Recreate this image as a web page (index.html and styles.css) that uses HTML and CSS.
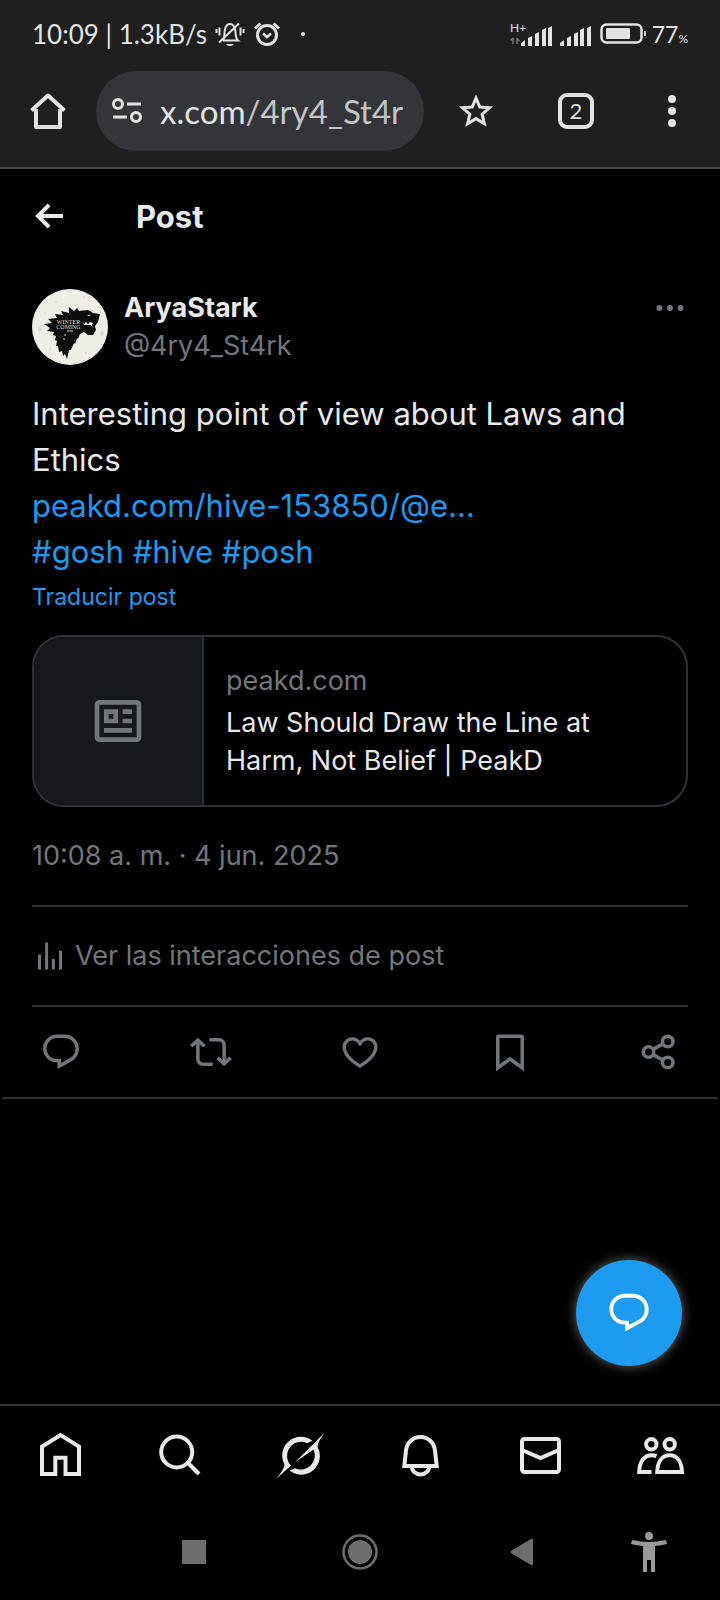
FILE: index.html
```html
<!DOCTYPE html>
<html lang="es">
<head>
    <meta charset="UTF-8">
    <meta name="viewport" content="width=device-width, initial-scale=1.0">
    <title>Post</title>
    <link rel="stylesheet" href="styles.css">
</head>
<body>
    <!-- Phone status bar -->
    <div class="status-bar">
        <span class="status-text">10:09 | 1.3kB/s</span>
        <svg class="status-icon" width="30" height="28" viewBox="0 0 30 28" fill="none" stroke="#e3e3e3" stroke-width="2">
            <path d="M8 21c2-3 1-8 2-12 1-3.500 3-5 5-5s4 1.500 5 5c1 4 0 9 3 11.500H8M4 22.500L24 3.500"/>
            <path d="M1.500 9v4M4.500 7.500v8M25.500 7.500v8M28.500 9v4"/>
            <path d="M11 24h8c-1 2.500-7 2.500-8 0z" fill="#e3e3e3" stroke="none"/>
        </svg>
        <svg class="status-icon" width="28" height="28" viewBox="0 0 28 28" fill="none" stroke="#e3e3e3" stroke-width="3">
            <circle cx="14" cy="15" r="9.500"/>
            <path d="M10 13.500l4 3.500 4-3.500" stroke-width="2.500"/>
            <path d="M2 8.500l5.500-5M26 8.500l-5.500-5"/>
        </svg>
        <span class="status-dot"></span>
        <svg class="signal" width="82" height="26" viewBox="0 0 82 26" fill="#e3e3e3">
            <text class="network" x="0" y="11">H+</text>
            <path d="M3 17v6M0.500 19.500l2.500-2.500M7 23v-6M9.500 20l-2.500-2.500" stroke="#777" stroke-width="1.500" fill="none"/>
            <path d="M11 25v-3l4-3v6zM18 25v-8l4-2v10zM25 25V13l4-2v14zM32 25V9l4-2v18zM38 25V7l4-2v20z"/>
            <path d="M50 25v-3l4-3v6zM57 25v-8l4-2v10zM64 25V13l4-2v14zM70 25V9l4-2v18zM77 25V7l4-2v20z"/>
        </svg>
        <svg class="battery" width="47" height="22" viewBox="0 0 47 22">
            <rect x="1.500" y="1.500" width="40" height="18" rx="5" fill="none" stroke="#e3e3e3" stroke-width="2.500"/>
            <rect x="6" y="5" width="24" height="11" rx="1" fill="#e3e3e3"/>
            <path d="M44 8h1.500q1 2.500 0 5H44z" fill="#e3e3e3"/>
        </svg>
        <span class="percent">77<small>%</small></span>
    </div>

    <!-- Browser toolbar -->
    <div class="toolbar">
        <button class="icon-btn" aria-label="Inicio">
            <svg width="36" height="36" viewBox="0 0 36 36" fill="none" stroke="#e3e3e3" stroke-width="4" stroke-linejoin="round">
                <path d="M6 16v18h24V16M1.500 17.500L18 2.500l16.500 15"/>
            </svg>
        </button>
        <div class="address">
            <button class="icon-btn" aria-label="Información del sitio">
                <svg width="30" height="26" viewBox="0 0 30 26" fill="none" stroke="#e3e3e3" stroke-width="3">
                    <circle cx="6" cy="6" r="4.500"/>
                    <circle cx="24" cy="19" r="4.500"/>
                    <path d="M15 6h14M1 19h14"/>
                </svg>
            </button>
            <button class="url">x.com<span>/4ry4_St4r</span></button>
        </div>
        <button class="icon-btn" aria-label="Favorito">
            <svg width="36" height="34" viewBox="0 0 36 34" fill="none" stroke="#e3e3e3" stroke-width="3">
                <path d="M18 4l3.800 9 9.700.800-7.400 6.400 2.300 9.500L18 24.600l-8.400 5.100 2.300-9.500-7.400-6.400 9.700-.800z"/>
            </svg>
        </button>
        <button class="icon-btn" aria-label="Pestañas"><span class="tab-count">2</span></button>
        <button class="icon-btn" aria-label="Menú">
            <svg width="8" height="32" viewBox="0 0 8 32" fill="#e3e3e3">
                <circle cx="4" cy="4" r="4"/><circle cx="4" cy="16" r="4"/><circle cx="4" cy="28" r="4"/>
            </svg>
        </button>
    </div>

    <header class="page-header">
        <button class="icon-btn" aria-label="Atrás">
            <svg width="36" height="36" viewBox="0 0 36 36" fill="none" stroke="#e7e9ea" stroke-width="4">
                <path d="M17 7L6 18l11 11M6 18h25"/>
            </svg>
        </button>
        <h1>Post</h1>
    </header>

    <main>
        <article class="post">
            <div class="author">
                <svg class="avatar" viewBox="0 0 76 76">
                    <circle cx="38" cy="38" r="38" fill="#eeeee6"/>
                    <g fill="#d9d9d0">
                        <circle cx="8" cy="40" r="2"/><circle cx="13" cy="24" r="1"/><circle cx="24" cy="13" r="1"/>
                        <circle cx="52" cy="8" r="1"/><circle cx="70" cy="44" r="2"/><circle cx="67" cy="18" r="1"/>
                        <circle cx="18" cy="60" r="1"/><circle cx="54" cy="64" r="1"/>
                    </g>
                    <path fill="#0c0c0c" d="M12 35l8-1-4-4 9-1-2-4 8 1-2-4 8 2 0-6 5 4 3-3 2 3 9-1 5 3 7 1-2 8-3 4 1 4-3 5-5 0-4-3-4 2-2 5-1-1-2 6-1-1-3 7-2 0-2 9-2-5-2 2-1-5-3 1-1-6-2 0 1-5-2-1 1-4-3-1 1-3-7-1 3-3z"/>
                    <path fill="#eeeee6" d="M50 32l2 3 2-2 2 2 2-2 3 1-1 2-8 0zM55 26l4 0-2 1zM60 36l1 3-2-3z"/>
                    <text x="36.500" y="35">WINTER</text>
                    <text x="36.500" y="40">COMING</text>
                    <path stroke="#c8c8c0" d="M32 46h2M31 50h2M35 42h6" fill="none"/>
                </svg>
                <div class="names">
                    <a class="name" href="#">AryaStark</a>
                    <a class="handle" href="#">@4ry4_St4rk</a>
                </div>
                <button class="icon-btn more" aria-label="Más opciones">
                    <svg width="36" height="36" viewBox="0 0 24 24" fill="#71767b">
                        <circle cx="5" cy="12" r="2"/><circle cx="12" cy="12" r="2"/><circle cx="19" cy="12" r="2"/>
                    </svg>
                </button>
            </div>

            <p class="post-text">Interesting point of view about Laws and Ethics<br>
                <a href="#">peakd.com/hive-153850/@e…</a><br>
                <a href="#">#gosh</a> <a href="#">#hive</a> <a href="#">#posh</a></p>
            <button class="translate">Traducir post</button>

            <a class="card" href="#">
                <span class="card-image">
                    <svg width="56" height="56" viewBox="0 0 24 24" fill="#71767b">
                        <path fill-rule="evenodd" d="M4 3h16a2 2 0 0 1 2 2v14a2 2 0 0 1-2 2H4a2 2 0 0 1-2-2V5a2 2 0 0 1 2-2zM4 5v14h16V5zM6 7h6v6H6zM8 9v2h2V9zM14 7h4v2h-4zM14 11h4v2h-4zM6 15h12v2H6z"/>
                    </svg>
                </span>
                <span class="card-text">
                    <span class="card-site">peakd.com</span>
                    <span class="card-title">Law Should Draw the Line at Harm, Not Belief | PeakD</span>
                </span>
            </a>

            <time class="date">10:08 a. m. · 4 jun. 2025</time>

            <a class="interactions" href="#">
                <svg width="36" height="36" viewBox="0 0 24 24" fill="#71767b">
                    <path d="M8.750 21V3h2v18h-2zM18 21V8.500h2V21h-2zM4 21V11h2v10H4zm9.250 0v-7h2v7h-2z"/>
                </svg>
                <span>Ver las interacciones de post</span>
            </a>

            <div class="actions">
                <button class="icon-btn" aria-label="Responder">
                    <svg width="42" height="42" viewBox="0 0 24 24" fill="#71767b"><path d="M1.751 10c0-4.420 3.584-8 8.005-8h4.366c4.490 0 8.129 3.640 8.129 8.130 0 2.960-1.607 5.680-4.196 7.110l-8.054 4.460v-3.690h-.067c-4.490.100-8.183-3.510-8.183-8.010zm8.005-6c-3.317 0-6.005 2.690-6.005 6 0 3.370 2.770 6.080 6.138 6.010l.351-.010h1.761v2.300l5.087-2.810c1.951-1.080 3.163-3.130 3.163-5.360 0-3.390-2.744-6.130-6.129-6.130H9.756z"/></svg>
                </button>
                <button class="icon-btn" aria-label="Repostear">
                    <svg width="42" height="42" viewBox="0 0 24 24" fill="#71767b"><path d="M4.500 3.880l4.432 4.140-1.364 1.460L5.500 7.550V16c0 1.100.896 2 2 2H13v2H7.500c-2.209 0-4-1.790-4-4V7.550L1.432 9.480.068 8.020 4.500 3.880zM16.500 6H11V4h5.500c2.209 0 4 1.790 4 4v8.450l2.068-1.930 1.364 1.460-4.432 4.140-4.432-4.140 1.364-1.460 2.068 1.930V8c0-1.100-.896-2-2-2z"/></svg>
                </button>
                <button class="icon-btn" aria-label="Me gusta">
                    <svg width="42" height="42" viewBox="0 0 24 24" fill="#71767b"><path d="M16.697 5.500c-1.222-.060-2.679.510-3.890 2.160l-.805 1.090-.806-1.090C9.984 6.010 8.526 5.440 7.304 5.500c-1.243.070-2.349.780-2.910 1.910-.552 1.120-.633 2.780.479 4.820 1.074 1.970 3.257 4.270 7.129 6.610 3.870-2.340 6.052-4.640 7.126-6.610 1.111-2.040 1.030-3.700.477-4.820-.561-1.130-1.666-1.840-2.908-1.910zm4.187 7.690c-1.351 2.480-4.001 5.120-8.379 7.670l-.503.300-.504-.300c-4.379-2.550-7.029-5.190-8.382-7.670-1.360-2.500-1.410-4.860-.514-6.670.887-1.790 2.647-2.910 4.601-3.010 1.651-.090 3.368.560 4.798 2.010 1.429-1.450 3.146-2.100 4.796-2.010 1.954.100 3.714 1.220 4.601 3.010.896 1.810.846 4.170-.514 6.670z"/></svg>
                </button>
                <button class="icon-btn" aria-label="Guardar">
                    <svg width="42" height="42" viewBox="0 0 24 24" fill="#71767b"><path d="M4 3.500C4 2.670 4.670 2 5.500 2h13c.830 0 1.500.670 1.500 1.500v19.440l-8-5.710-8 5.710V3.500zM6 4v15.060l6-4.290 6 4.290V4H6z"/></svg>
                </button>
                <button class="icon-btn" aria-label="Compartir">
                    <svg width="42" height="42" viewBox="0 0 24 24" fill="none" stroke="#71767b" stroke-width="2"><circle cx="6" cy="12" r="3"/><circle cx="17" cy="6" r="3"/><circle cx="17" cy="18" r="3"/><path d="M8.600 10.500l5.800-3.200M8.600 13.500l5.800 3.200"/></svg>
                </button>
            </div>
        </article>
    </main>

    <button class="reply-fab" aria-label="Responder">
        <svg width="46" height="46" viewBox="0 0 24 24" fill="#fff"><path d="M1.751 10c0-4.420 3.584-8 8.005-8h4.366c4.490 0 8.129 3.640 8.129 8.130 0 2.960-1.607 5.680-4.196 7.110l-8.054 4.460v-3.690h-.067c-4.490.100-8.183-3.510-8.183-8.010zm8.005-6c-3.317 0-6.005 2.690-6.005 6 0 3.370 2.770 6.080 6.138 6.010l.351-.010h1.761v2.300l5.087-2.810c1.951-1.080 3.163-3.130 3.163-5.360 0-3.390-2.744-6.130-6.129-6.130H9.756z"/></svg>
    </button>

    <nav class="tabs">
        <a href="#" aria-label="Inicio">
            <svg viewBox="0 0 52 52"><path d="M8 45V17.500L26.500 6 45 17.500V45H31.500V28.700H21.300V45z"/></svg>
        </a>
        <a href="#" aria-label="Buscar">
            <svg viewBox="0 0 52 52"><circle cx="22.700" cy="23" r="15.500"/><path d="M34 34l11 11"/></svg>
        </a>
        <a href="#" aria-label="Grok">
            <svg class="solid" viewBox="0 0 52 52">
                <path d="M38.500 11.800A18.700 18.700 0 0 0 10.500 35.500Q10.500 40 2.300 49.700L17 36.600A14 14 0 0 1 33 14.200z"/>
                <path d="M15.500 41.600A18.700 18.700 0 0 0 43.500 17.900Q43.500 13 51 3.300L21.300 33 39.500 20.500A14 14 0 0 1 21 39.200z"/>
            </svg>
        </a>
        <a href="#" aria-label="Notificaciones">
            <svg viewBox="0 0 52 52"><path d="M10.300 37L12 21.500C12.800 13.500 19 8 26.500 8S40.200 13.500 41 21.500L42.700 37z"/><path d="M18 38a8.500 7.500 0 0 0 17 0"/></svg>
        </a>
        <a href="#" aria-label="Mensajes">
            <svg viewBox="0 0 52 52"><rect x="8" y="10" width="37" height="33" rx="2.500"/><path d="M8 21l18.500 8L45 21"/></svg>
        </a>
        <a href="#" aria-label="Comunidades">
            <svg viewBox="0 0 52 52"><circle cx="17.300" cy="15.300" r="5.200"/><circle cx="35.700" cy="15.300" r="5.200"/><path d="M22.500 27Q20.500 26.300 17.500 26.300C10 26.300 5.400 33 5.200 43H17.500M23.200 43C23.600 33 28 26.300 35.600 26.300S47.600 33 48 43z"/></svg>
        </a>
    </nav>

    <!-- Android navigation -->
    <div class="system-nav">
        <button class="icon-btn" aria-label="Recientes">
            <svg width="24" height="24" viewBox="0 0 24 24" fill="#6e6e6e"><rect width="24" height="24" rx="1"/></svg>
        </button>
        <button class="icon-btn" aria-label="Pantalla principal">
            <svg width="36" height="36" viewBox="0 0 36 36" fill="#6e6e6e"><circle cx="18" cy="18" r="12"/><circle cx="18" cy="18" r="16.500" fill="none" stroke="#6e6e6e" stroke-width="2.500"/></svg>
        </button>
        <button class="icon-btn" aria-label="Volver">
            <svg width="24" height="28" viewBox="0 0 24 28" fill="#6e6e6e"><path d="M1 13L21 1q2-1 2 1v24q0 2-2 1L1 15q-1-1 0-2z"/></svg>
        </button>
        <button class="icon-btn" aria-label="Accesibilidad">
            <svg width="36" height="42" viewBox="0 0 36 42" fill="#9a9a9a"><circle cx="18" cy="5" r="4"/><path d="M1 9q17 4 34 0l1 4q-6 1.500-12 2v26h-4V29h-4v12h-4V15q-6-.500-12-2z"/></svg>
        </button>
    </div>
</body>
</html>
```
FILE: styles.css
```css
* {
    box-sizing: border-box;
}

body {
    margin: 0;
    min-height: 100vh;
    display: flex;
    flex-direction: column;
    background-color: #000;
    color: #e7e9ea;
    font-family: Inter, "Liberation Sans", sans-serif;
}

a {
    color: inherit;
    text-decoration: none;
}

button {
    padding: 0;
    border: none;
    background: none;
    color: inherit;
    font-family: inherit;
    cursor: pointer;
}

svg {
    display: block;
    flex-shrink: 0;
}

.icon-btn {
    display: flex;
    align-items: center;
    justify-content: center;
}

/* Status bar */
.status-bar {
    display: flex;
    align-items: center;
    height: 68px;
    padding: 0 32px;
    background-color: #1f1f1f;
    color: #e3e3e3;
    font-family: Lato, sans-serif;
}

.status-text {
    margin-right: 8px;
    font-size: 26px;
    white-space: pre;
}

.status-icon {
    margin-right: 8px;
}

.status-dot {
    width: 4px;
    height: 4px;
    margin-left: 12px;
    border-radius: 50%;
    background-color: #e3e3e3;
}

.signal {
    margin-left: auto;
}

.network {
    font-size: 12px;
}

.battery {
    margin: 0 5px 0 8px;
}

.percent {
    font-size: 23px;
}

.percent small {
    font-size: 12px;
}

/* Browser toolbar */
.toolbar {
    display: grid;
    grid-template-columns: 96px 1fr 104px 96px 96px;
    height: 101px;
    padding: 3px 0 16px;
    border-bottom: 2px solid #454545;
    background-color: #1f1f1f;
    color: #e3e3e3;
    font-family: Lato, sans-serif;
}

.address {
    display: flex;
    align-items: center;
    gap: 18px;
    min-width: 0;
    padding: 0 16px;
    border-radius: 40px;
    background-color: #343539;
}

.url {
    overflow: hidden;
    font-size: 33px;
    white-space: nowrap;
}

.url span {
    color: #c3c4c6;
}

.tab-count {
    width: 36px;
    height: 36px;
    border: 4px solid #e3e3e3;
    border-radius: 9px;
    font-size: 22px;
    line-height: 28px;
}

/* Post header */
.page-header {
    display: flex;
    align-items: center;
    gap: 68px;
    height: 94px;
    padding: 0 32px;
}

.page-header h1 {
    margin: 0;
    font-size: 31px;
    font-weight: 700;
}

main {
    flex: 1;
}

.post {
    margin: 0 2px;
    padding: 26px 30px 0;
    border-bottom: 2px solid #2f3336;
}

.author {
    display: flex;
    gap: 16px;
}

.avatar {
    width: 76px;
    height: 76px;
}

.avatar text {
    fill: #d8d8d0;
    font-family: "Liberation Serif", serif;
    font-size: 6px;
    text-anchor: middle;
}

.names {
    display: flex;
    flex: 1;
    flex-direction: column;
    font-size: 27px;
    line-height: 38px;
}

.name {
    font-weight: 700;
}

.handle {
    color: #71767b;
}

.more {
    height: 38px;
}

.post-text {
    margin: 26px 0 4px;
    font-size: 31px;
    line-height: 46px;
}

.post-text a,
.translate {
    color: #1d9bf0;
}

.translate {
    display: block;
    font-size: 23px;
    line-height: 36px;
}

.card {
    display: flex;
    margin-top: 20px;
    overflow: hidden;
    border: 2px solid #2f3336;
    border-radius: 32px;
}

.card-image {
    display: flex;
    align-items: center;
    justify-content: center;
    width: 170px;
    height: 168px;
    border-right: 2px solid #2f3336;
    background-color: #16181c;
}

.card-text {
    display: flex;
    flex: 1;
    flex-direction: column;
    justify-content: center;
    gap: 4px;
    padding: 0 22px;
    font-size: 27px;
    line-height: 38px;
}

.card-site {
    color: #71767b;
}

.date {
    display: block;
    padding: 30px 0;
    border-bottom: 2px solid #2f3336;
    color: #71767b;
    font-size: 27px;
    line-height: 38px;
}

.interactions {
    display: flex;
    align-items: center;
    gap: 7px;
    padding: 30px 0;
    border-bottom: 2px solid #2f3336;
    color: #71767b;
    font-size: 27px;
    line-height: 38px;
}

.actions {
    display: flex;
    justify-content: space-between;
    padding: 24px 8px;
}

.reply-fab {
    position: fixed;
    right: 38px;
    bottom: 234px;
    display: flex;
    align-items: center;
    justify-content: center;
    width: 106px;
    height: 106px;
    border-radius: 50%;
    background-color: #1d9bf0;
    box-shadow: 0 0 12px rgba(255, 255, 255, 0.4);
}

/* Bottom tabs */
.tabs {
    display: flex;
    height: 100px;
    border-top: 2px solid #2f3336;
}

.tabs a {
    display: flex;
    flex: 1;
    align-items: center;
    justify-content: center;
}

.tabs svg {
    width: 52px;
    height: 52px;
    fill: none;
    stroke: #e7e9ea;
    stroke-width: 4;
}

.tabs .solid {
    fill: #e7e9ea;
    stroke: none;
}

.system-nav {
    display: grid;
    grid-template-columns: 166fr 166fr 158fr 96fr;
    height: 96px;
    padding: 0 23px 0 111px;
}
```
